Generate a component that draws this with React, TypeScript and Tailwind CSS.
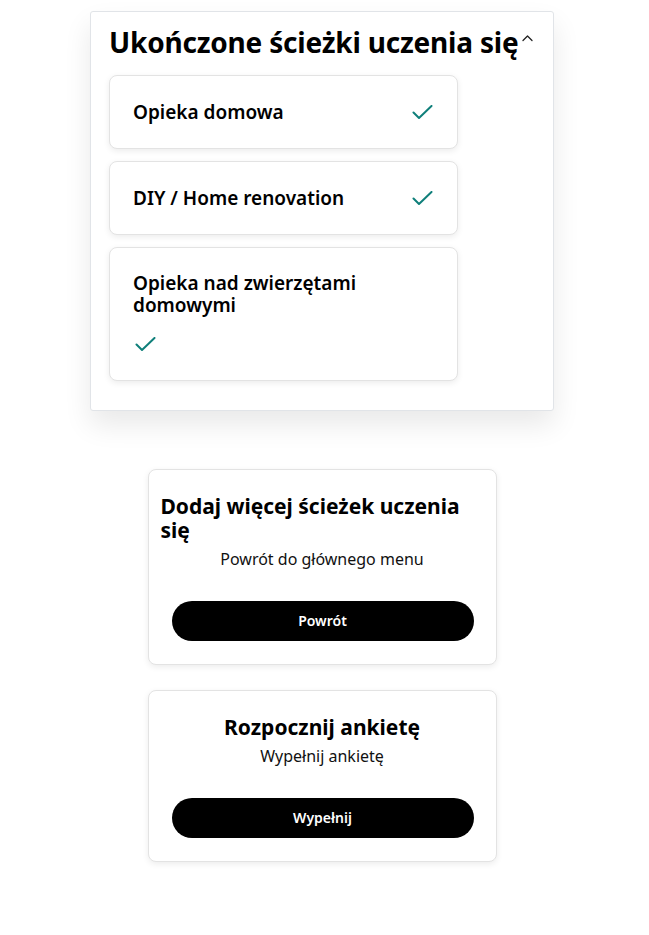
import { useState } from 'react';

const paths = ['Opieka domowa', 'DIY / Home renovation', 'Opieka nad zwierzętami domowymi'];

function Check() {
  return (
    <svg width="21" height="15" viewBox="0 0 21 15" fill="none" className="shrink-0">
      <path d="M1.5 7.5l5.5 5.5L19.5 1" stroke="#0f7f7a" strokeWidth="2" strokeLinecap="round" strokeLinejoin="round" />
    </svg>
  );
}

function ActionCard({
  title,
  text,
  button,
  center,
}: {
  title: string;
  text: string;
  button: string;
  center?: boolean;
}) {
  return (
    <section className="w-[349px] rounded-lg border border-[#e3e3e3] bg-white px-3 pt-6 pb-[23px] shadow-[0_2px_6px_rgba(0,0,0,0.08)]">
      <h2 className={`text-[21px] font-bold leading-6 text-black ${center ? 'text-center' : 'text-left'}`}>{title}</h2>
      <p className="mt-[5px] text-center text-base leading-6 text-[#111]">{text}</p>
      <button className="mx-[11px] mt-[30px] h-10 w-[302px] rounded-full bg-black text-sm font-semibold text-white">
        {button}
      </button>
    </section>
  );
}

export default function App() {
  const [open, setOpen] = useState(true);

  return (
    <main className="min-h-[935px] bg-white pt-[11px] pr-[5px] font-['Noto_Sans',sans-serif] text-black">
      <div className="flex flex-col items-center">
        <section className="w-[464px] rounded-[3px] border border-[#e1e4e8] bg-white px-[18px] pt-[14px] pb-[29px] shadow-[0_14px_28px_rgba(0,0,0,0.09)]">
          <button onClick={() => setOpen(!open)} className="flex items-start gap-[3px] text-left">
            <h1 className="text-[28px] font-bold leading-8 tracking-[-0.2px]">Ukończone ścieżki uczenia się</h1>
            <svg width="13" height="8" viewBox="0 0 13 8" fill="none" className="mt-[8px]">
              <path d="M2 6.5l4.5-4.5 4.5 4.5" stroke="#222" strokeWidth="1.3" strokeLinecap="round" strokeLinejoin="round" />
            </svg>
          </button>

          {open && (
            <div className="mt-[17px] flex w-[349px] flex-col gap-3">
              {paths.map((p) => (
                <div
                  key={p}
                  className="flex flex-wrap items-center justify-between gap-y-4 rounded-lg border border-[#e3e3e3] bg-white px-[23px] py-6 shadow-[0_2px_6px_rgba(0,0,0,0.08)]"
                >
                  <span className="max-w-full text-[19px] font-semibold leading-[22px]">{p}</span>
                  <span className="flex h-6 items-center pl-[2px] pr-[1px]">
                    <Check />
                  </span>
                </div>
              ))}
            </div>
          )}
        </section>

        <div className="mt-[58px] flex flex-col gap-[25px]">
          <ActionCard title="Dodaj więcej ścieżek uczenia się" text="Powrót do głównego menu" button="Powrót" />
          <ActionCard title="Rozpocznij ankietę" text="Wypełnij ankietę" button="Wypełnij" center />
        </div>
      </div>
    </main>
  );
}
